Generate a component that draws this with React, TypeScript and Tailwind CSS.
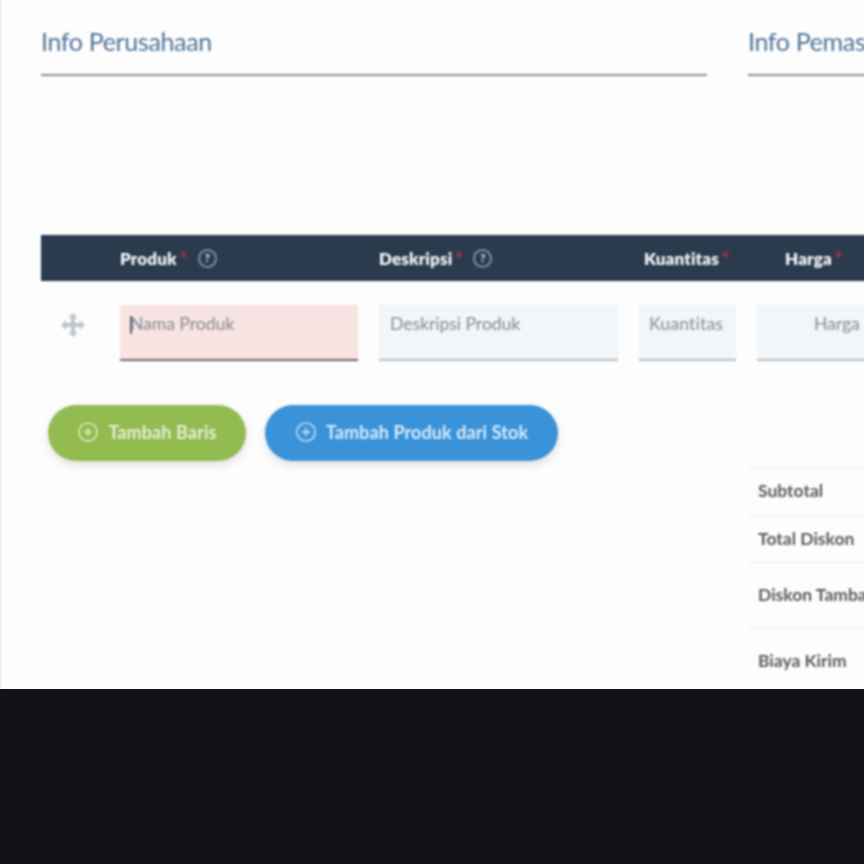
import { CirclePlus } from "lucide-react";

const font = { fontFamily: "Lato, sans-serif" };

function Required() {
  return <span className="absolute -right-[11px] top-[-2px] text-[20px] font-black text-[#a33442]">*</span>;
}

function HeaderLabel({ label, help }: { label: string; help?: boolean }) {
  return (
    <div className="flex items-center pt-[1px]">
      <span className="relative text-[17px] font-extrabold tracking-[0.15px] text-[#f6f7f9]">
        {label}
        <Required />
      </span>
      {help && (
        <span className="ml-[21px] flex h-[19px] w-[19px] items-center justify-center rounded-full border-2 border-[#7d8fa3] text-[11px] font-black text-[#e6eaee]">
          ?
        </span>
      )}
    </div>
  );
}

function Field({ placeholder, className, focused }: { placeholder: string; className: string; focused?: boolean }) {
  return (
    <div className={`relative h-[56px] shrink-0 border-b-2 pt-[8px] text-[17.5px] leading-[22px] text-[#8a8e93] ${className}`}>
      {focused && <span className="absolute left-[10px] top-[11px] h-[18px] w-[1.5px] bg-[#5f6469]" />}
      {placeholder}
    </div>
  );
}

function DragHandle() {
  return (
    <svg width="24" height="24" viewBox="0 0 24 24" className="text-[#bfc4c9]" fill="currentColor">
      <path d="M12 0l5 5h-3v5h5V7l5 5-5 5v-3h-5v5h3l-5 5-5-5h3v-5H5v3l-5-5 5-5v3h5V5H7z" />
    </svg>
  );
}

function SummaryRow({ label, className }: { label: string; className: string }) {
  return (
    <div className={`flex items-center border-t border-[#ebecee] pl-[10px] text-[17.5px] font-bold text-[#55595e] whitespace-nowrap ${className}`}>
      {label}
    </div>
  );
}

export default function App() {
  return (
    <div className="flex h-[864px] w-[864px] flex-col overflow-hidden bg-[#121316]" style={font}>
      <div className="h-[689px] shrink-0 overflow-hidden border-l-2 border-[#f1f1f1] bg-[#fdfdfd] pl-[39px]">
        <div className="blur-[0.9px]">
          <div className="flex w-[900px] gap-[41px] pt-[23px]">
            <div className="h-[53px] w-[666px] shrink-0 border-b-2 border-[#8e8e8e] text-[25px] leading-[36px] tracking-[-0.35px] text-[#4f7398]">
              Info Perusahaan
            </div>
            <div className="h-[53px] w-[300px] shrink-0 border-b-2 border-[#8e8e8e] text-[25px] leading-[36px] tracking-[-0.35px] text-[#4f7398]">
              Info Pemasok
            </div>
          </div>

          <div className="mt-[159px] flex h-[46px] w-[900px] items-center bg-[#2a3b4e] pl-[79px]">
            <div className="w-[259px] shrink-0">
              <HeaderLabel label="Produk" help />
            </div>
            <div className="w-[265px] shrink-0">
              <HeaderLabel label="Deskripsi" help />
            </div>
            <div className="w-[141px] shrink-0">
              <HeaderLabel label="Kuantitas" />
            </div>
            <HeaderLabel label="Harga" />
          </div>

          <div className="mt-[24px] flex w-[900px] items-start">
            <div className="flex w-[79px] shrink-0 justify-center pr-[16px] pt-[8px]">
              <DragHandle />
            </div>
            <Field placeholder="Nama Produk" className="w-[238px] border-[#66676a] bg-[#f8e4e3] pl-[10px]" focused />
            <Field placeholder="Deskripsi Produk" className="ml-[21px] w-[239px] border-[#b8bdc3] bg-[#f1f6fb] pl-[11px]" />
            <Field placeholder="Kuantitas" className="ml-[21px] w-[97px] border-[#b8bdc3] bg-[#f1f6fb] pl-[10px] tracking-[0.2px]" />
            <Field placeholder="Harga" className="ml-[21px] w-[140px] border-[#b8bdc3] bg-[#f1f6fb] pl-[57px]" />
          </div>

          <div className="mt-[44px] flex gap-[19px] pl-[7px]">
            <button className="flex h-[56px] w-[198px] items-center justify-center gap-[9px] rounded-full bg-[#92bb50] pb-[2px] text-[18px] font-bold tracking-[0.1px] text-[#e6f0d6] shadow-[0_4px_10px_rgba(0,0,0,0.12)]">
              <CirclePlus size={22} strokeWidth={1.5} />
              Tambah Baris
            </button>
            <button className="flex h-[56px] w-[293px] items-center justify-center gap-[9px] rounded-full bg-[#3a92d8] pb-[2px] text-[18px] font-bold tracking-[0.1px] text-[#dcecf9] shadow-[0_4px_10px_rgba(0,0,0,0.12)]">
              <CirclePlus size={22} strokeWidth={1.5} />
              Tambah Produk dari Stok
            </button>
          </div>

          <div className="mt-[6px] ml-[707px] w-[200px]">
            <SummaryRow label="Subtotal" className="h-[48px]" />
            <SummaryRow label="Total Diskon" className="h-[47px]" />
            <SummaryRow label="Diskon Tambahan" className="h-[65px]" />
            <SummaryRow label="Biaya Kirim" className="h-[68px]" />
          </div>
        </div>
      </div>
    </div>
  );
}
